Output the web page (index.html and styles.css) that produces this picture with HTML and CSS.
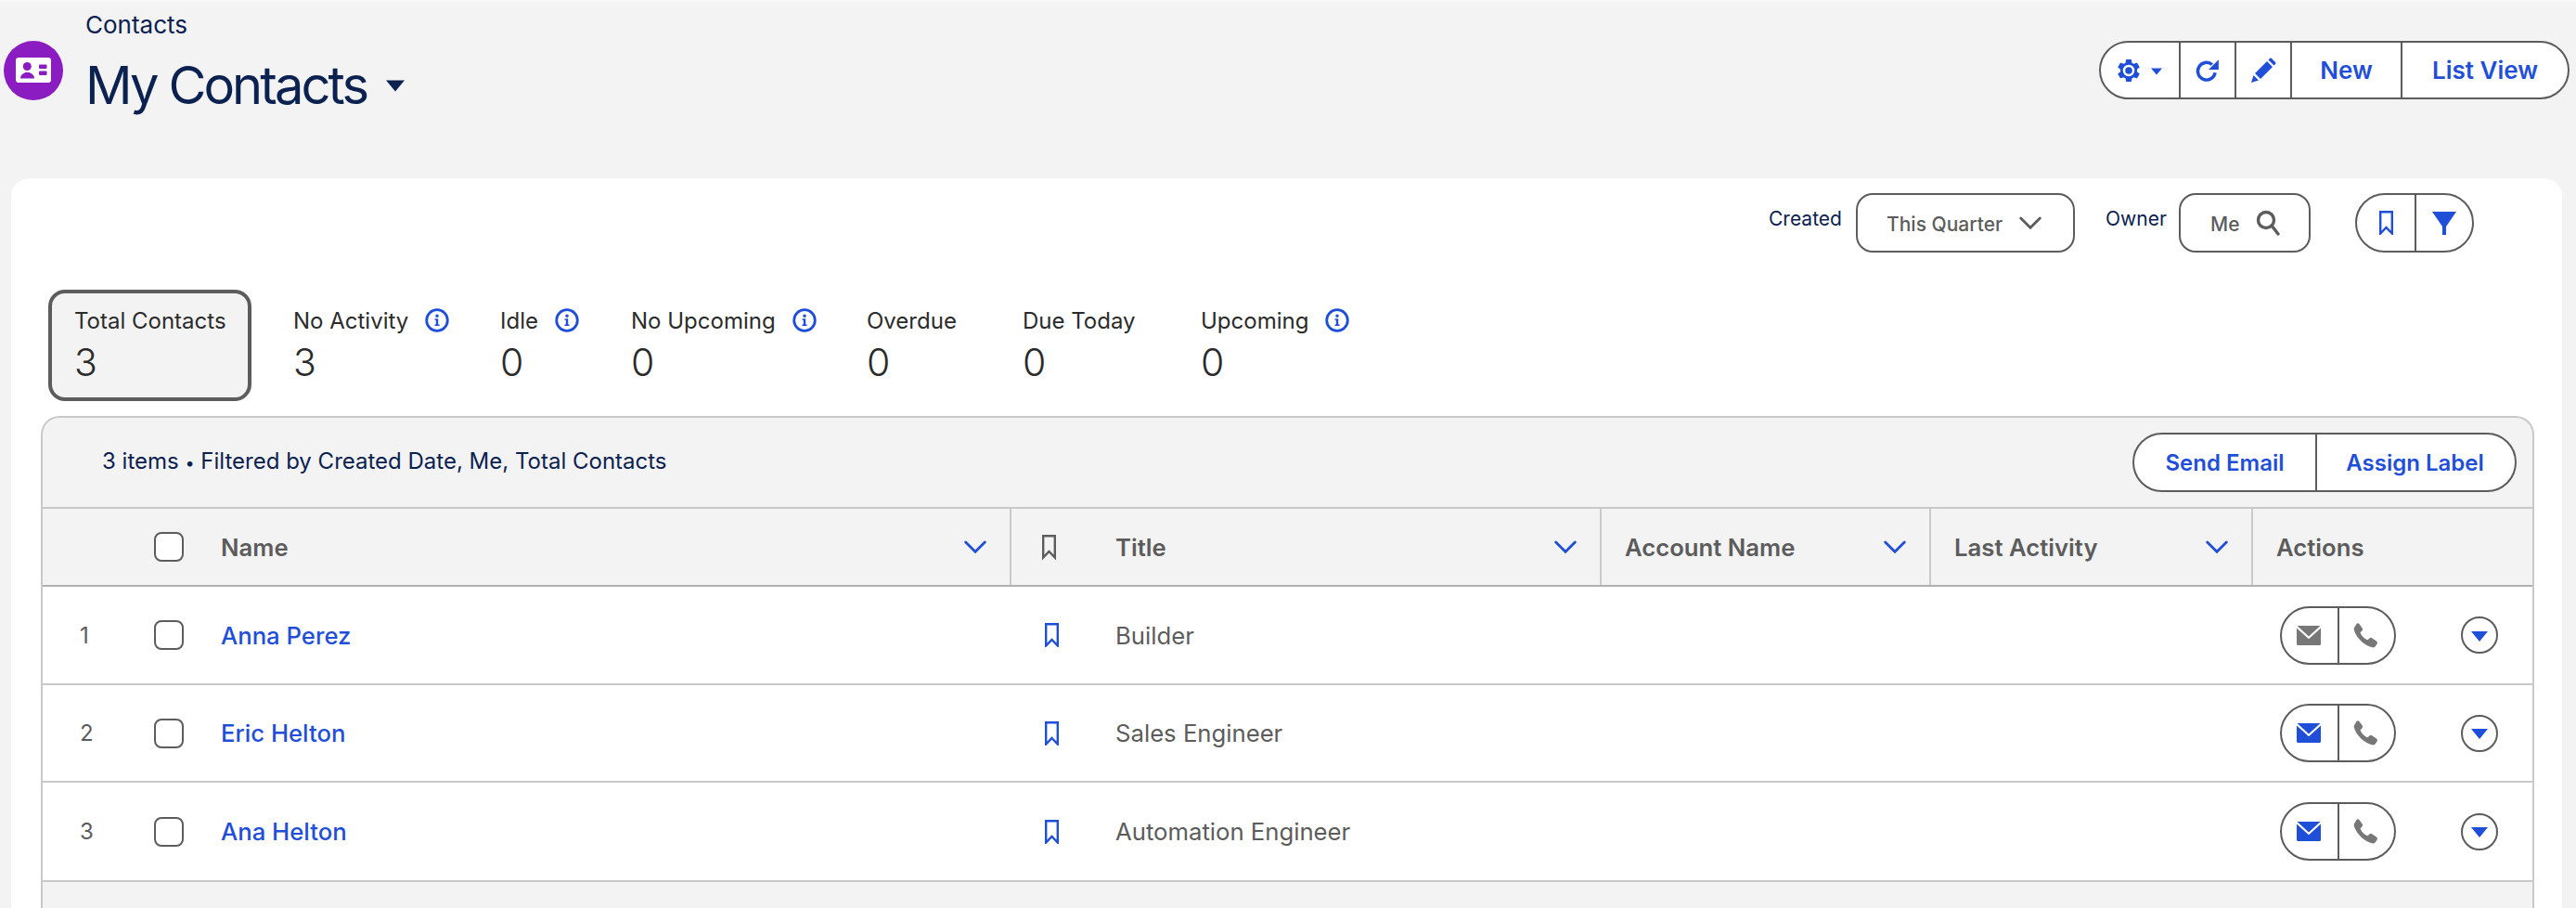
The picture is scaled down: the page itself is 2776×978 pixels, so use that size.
FILE: index.html
```html
<!DOCTYPE html>
<html lang="en">
<head>
<meta charset="utf-8">
<title>My Contacts</title>
<link rel="stylesheet" href="styles.css">
</head>
<body>
<svg class="defs" width="0" height="0" aria-hidden="true">
  <symbol id="bookmark" viewBox="0 0 15 26"><path d="M1.200 24.500V1.200h12.600v23.300L7.500 18z" fill="none" stroke="currentColor" stroke-width="2.400"/></symbol>
  <symbol id="chev" viewBox="0 0 24 15"><path d="M1.700 2L12 12.300 22.300 2" fill="none" stroke="currentColor" stroke-width="2.800" stroke-linecap="round"/></symbol>
  <symbol id="mail" viewBox="0 0 26 21"><path d="M.5 0h25L13 11.500z" fill="currentColor"/><path d="M0 2.500l13 11.800L26 2.500V19.500a1.500 1.500 0 0 1-1.500 1.500h-23A1.500 1.500 0 0 1 0 19.500z" fill="currentColor"/></symbol>
  <symbol id="phone" viewBox="0 0 26 26"><path d="M3.500.8C4.500 0 5.600.2 6.300 1.100l3 4.200c.6.9.5 1.900-.2 2.600L7.700 9.300c-.4.4-.4.800-.2 1.300 1.200 2.800 3.700 5.400 6.500 6.800.5.300 1 .200 1.400-.2l1.400-1.400c.700-.7 1.700-.8 2.500-.2l4.700 3.200c1 .7 1.200 1.800.6 2.800l-1.400 2.200c-.8 1.300-2.200 1.900-3.700 1.500C11 23.400 2.900 15 .8 7.300.4 5.900.900 4.700 1.900 3.700z" fill="currentColor"/></symbol>
  <symbol id="caret" viewBox="0 0 20 12"><path d="M0 0h20L10 12z" fill="currentColor"/></symbol>
  <symbol id="info" viewBox="0 0 26 26"><circle cx="13" cy="13" r="11.300" fill="none" stroke="currentColor" stroke-width="2.800"/><path d="M10.500 11.200h3.700v6.300h1.400v1.500h-5.100v-1.500h1.300v-4.800h-1.300zM13 6.500a1.800 1.800 0 1 1 0 3.600 1.800 1.800 0 0 1 0-3.600z" fill="currentColor"/></symbol>
</svg>

<header class="page-head">
  <div class="head-icon">
    <svg viewBox="0 0 64 64" width="64" height="64">
      <circle cx="32" cy="32" r="32" fill="#8a1cc2"/>
      <rect x="13" y="18" width="38" height="27" rx="3" fill="#fff"/>
      <circle cx="25.300" cy="27.500" r="4.500" fill="#8a1cc2"/>
      <path d="M18 40.500c0-4 3-5.500 5.500-6.500h4c2.500 1 5.500 2.500 5.500 6.500z" fill="#8a1cc2"/>
      <rect x="38" y="25.500" width="8.500" height="4.500" rx="1" fill="#8a1cc2"/>
      <rect x="38" y="32.500" width="8.500" height="4.500" rx="1" fill="#8a1cc2"/>
    </svg>
  </div>
  <div class="head-titles">
    <div class="crumb">Contacts</div>
    <h1 class="title">My Contacts <svg class="title-caret" width="20" height="13"><use href="#caret"/></svg></h1>
  </div>
  <div class="btn-group head-actions">
    <button class="btn btn-gear">
      <svg width="30" height="30" viewBox="0 0 24 24"><path fill="#1f4fd8" d="M19.140 12.940c.04-.3.06-.61.06-.94 0-.32-.02-.64-.07-.94l2.030-1.580c.18-.14.23-.41.12-.61l-1.920-3.320c-.12-.22-.37-.29-.59-.22l-2.390.96c-.5-.38-1.030-.7-1.620-.94l-.36-2.540c-.04-.24-.24-.41-.48-.41h-3.840c-.24 0-.43.17-.47.41l-.36 2.540c-.59.24-1.130.57-1.620.94l-2.390-.96c-.22-.08-.47 0-.59.22L2.740 8.870c-.12.21-.08.47.12.61l2.030 1.580c-.05.3-.09.63-.09.94s.02.64.07.94l-2.030 1.580c-.18.14-.23.41-.12.61l1.920 3.320c.12.22.37.29.59.22l2.390-.96c.5.38 1.030.7 1.620.94l.36 2.540c.05.24.24.41.48.41h3.840c.24 0 .44-.17.47-.41l.36-2.540c.59-.24 1.130-.56 1.620-.94l2.390.96c.22.08.47 0 .59-.22l1.920-3.320c.12-.22.07-.47-.12-.61z"/><circle cx="12" cy="12" r="5" fill="#fff"/><circle cx="12" cy="12" r="3" fill="#1f4fd8"/></svg>
      <svg class="gear-caret" width="12" height="8"><use href="#caret"/></svg>
    </button>
    <button class="btn btn-icon">
      <svg width="28" height="28" viewBox="0 0 26 26"><path d="M20.500 15a8.700 8.700 0 1 1-3-8" fill="none" stroke="#1f4fd8" stroke-width="3.200"/><path d="M24 2v10H14z" fill="#1f4fd8"/></svg>
    </button>
    <button class="btn btn-icon">
      <svg width="28" height="28" viewBox="0 0 28 28"><path d="M1 27l2.500-8L9 24.500zM5 17L18 4l6 6L11 23zM19.500 2.500l1.500-1.500c.6-.6 1.400-.6 2 0l4 4c.6.6.6 1.400 0 2L25.500 8.500z" fill="#1f4fd8"/></svg>
    </button>
    <button class="btn btn-new">New</button>
    <button class="btn btn-list">List View</button>
  </div>
</header>

<main class="card">
  <div class="filters">
    <span class="filter-label">Created</span>
    <div class="select select-quarter"><span class="select-text">This Quarter</span> <svg width="24" height="15"><use href="#chev"/></svg></div>
    <span class="filter-label label-owner">Owner</span>
    <div class="select select-owner"><span class="select-text">Me</span>
      <svg width="26" height="28" viewBox="0 0 26 28"><circle cx="11" cy="11" r="8.500" fill="none" stroke="#5c5c5c" stroke-width="3.400"/><path d="M17 17l7 9" stroke="#5c5c5c" stroke-width="3.400" stroke-linecap="round"/></svg>
    </div>
    <div class="btn-group filter-group">
      <button class="btn btn-bm"><svg width="15" height="26" class="blue"><use href="#bookmark"/></svg></button>
      <button class="btn btn-funnel"><svg width="26" height="25" viewBox="0 0 26 25"><path d="M0 0h26L15 16h-4z" fill="#1f4fd8"/><rect x="11" y="13" width="4" height="12" fill="#1f4fd8"/></svg></button>
    </div>
  </div>

  <div class="kpis">
    <div class="kpi kpi-total"><div class="kpi-label">Total Contacts</div><div class="kpi-value">3</div></div>
    <div class="kpi kpi-a"><div class="kpi-label">No Activity <svg class="info" width="26" height="26"><use href="#info"/></svg></div><div class="kpi-value">3</div></div>
    <div class="kpi kpi-b"><div class="kpi-label">Idle <svg class="info" width="26" height="26"><use href="#info"/></svg></div><div class="kpi-value">0</div></div>
    <div class="kpi kpi-c"><div class="kpi-label">No Upcoming <svg class="info" width="26" height="26"><use href="#info"/></svg></div><div class="kpi-value">0</div></div>
    <div class="kpi kpi-d"><div class="kpi-label">Overdue</div><div class="kpi-value">0</div></div>
    <div class="kpi kpi-e"><div class="kpi-label">Due Today</div><div class="kpi-value">0</div></div>
    <div class="kpi kpi-f"><div class="kpi-label">Upcoming <svg class="info" width="26" height="26"><use href="#info"/></svg></div><div class="kpi-value">0</div></div>
  </div>

  <section class="table">
    <div class="toolbar">
      <span class="summary">3 items <span class="dot">•</span> Filtered by Created Date, Me, Total Contacts</span>
      <div class="btn-group tool-actions">
        <button class="btn btn-send">Send Email</button>
        <button class="btn btn-assign">Assign Label</button>
      </div>
    </div>

    <div class="row row-head">
      <div class="cell"></div>
      <div class="cell cell-check"><span class="checkbox"></span></div>
      <div class="cell cell-text sep">Name<svg class="sort" width="24" height="15"><use href="#chev"/></svg></div>
      <div class="cell cell-bm"><svg class="bm-head" width="15" height="30"><use href="#bookmark"/></svg></div>
      <div class="cell cell-text sep">Title<svg class="sort" width="24" height="15"><use href="#chev"/></svg></div>
      <div class="cell cell-text sep">Account Name<svg class="sort" width="24" height="15"><use href="#chev"/></svg></div>
      <div class="cell cell-text sep">Last Activity<svg class="sort" width="24" height="15"><use href="#chev"/></svg></div>
      <div class="cell cell-text">Actions</div>
    </div>

    <div class="row row-data">
      <div class="cell cell-num">1</div>
      <div class="cell cell-check"><span class="checkbox"></span></div>
      <div class="cell cell-text"><a class="link">Anna Perez</a></div>
      <div class="cell cell-bm"><svg class="blue" width="15" height="26"><use href="#bookmark"/></svg></div>
      <div class="cell cell-text cell-plain">Builder</div>
      <div class="cell"></div>
      <div class="cell"></div>
      <div class="cell cell-actions">
        <div class="btn-group row-actions">
          <button class="btn btn-mail"><svg class="muted" width="26" height="21"><use href="#mail"/></svg></button>
          <button class="btn btn-phone"><svg class="muted" width="27" height="27"><use href="#phone"/></svg></button>
        </div>
        <button class="round"><svg width="18" height="11"><use href="#caret"/></svg></button>
      </div>
    </div>

    <div class="row row-data row-2">
      <div class="cell cell-num">2</div>
      <div class="cell cell-check"><span class="checkbox"></span></div>
      <div class="cell cell-text"><a class="link">Eric Helton</a></div>
      <div class="cell cell-bm"><svg class="blue" width="15" height="26"><use href="#bookmark"/></svg></div>
      <div class="cell cell-text cell-plain">Sales Engineer</div>
      <div class="cell"></div>
      <div class="cell"></div>
      <div class="cell cell-actions">
        <div class="btn-group row-actions">
          <button class="btn btn-mail"><svg class="blue" width="26" height="21"><use href="#mail"/></svg></button>
          <button class="btn btn-phone"><svg class="muted" width="27" height="27"><use href="#phone"/></svg></button>
        </div>
        <button class="round"><svg width="18" height="11"><use href="#caret"/></svg></button>
      </div>
    </div>

    <div class="row row-data row-3">
      <div class="cell cell-num">3</div>
      <div class="cell cell-check"><span class="checkbox"></span></div>
      <div class="cell cell-text"><a class="link">Ana Helton</a></div>
      <div class="cell cell-bm"><svg class="blue" width="15" height="26"><use href="#bookmark"/></svg></div>
      <div class="cell cell-text cell-plain">Automation Engineer</div>
      <div class="cell"></div>
      <div class="cell"></div>
      <div class="cell cell-actions">
        <div class="btn-group row-actions">
          <button class="btn btn-mail"><svg class="blue" width="26" height="21"><use href="#mail"/></svg></button>
          <button class="btn btn-phone"><svg class="muted" width="27" height="27"><use href="#phone"/></svg></button>
        </div>
        <button class="round"><svg width="18" height="11"><use href="#caret"/></svg></button>
      </div>
    </div>
  </section>
</main>
</body>
</html>
```
FILE: styles.css
```css
* { box-sizing: border-box; }
html, body { margin: 0; height: 978px; overflow: hidden; }
body {
  background: #f3f3f3;
  font-family: Inter, "Liberation Sans", sans-serif;
  color: #0b2150;
}
.defs { position: absolute; }
svg { display: block; flex: none; }
.blue { color: #1f4fd8; }
.muted { color: #777; }

.page-head {
  height: 192px;
  display: flex;
  align-items: flex-start;
  padding: 0 7px 0 4px;
  box-shadow: inset 0 2px 0 #f8f8f8;
}
.head-icon { margin-top: 44px; width: 64px; height: 64px; }
.head-titles { margin-left: 24px; padding-top: 11px; }
.crumb { font-size: 26px; line-height: 32px; }
.title {
  margin: 17px 0 0;
  font-size: 56px;
  line-height: 64px;
  font-weight: 400;
  letter-spacing: -2.9px;
  display: flex;
  align-items: center;
  gap: 21px;
}
.title-caret { color: #0b2150; margin-top: 1px; }

.btn-group {
  display: flex;
  border: 2px solid #5c5c5c;
  border-radius: 32px;
  background: #fff;
  overflow: hidden;
}
.btn {
  border: 0;
  border-left: 2px solid #5c5c5c;
  background: none;
  padding: 0;
  display: flex;
  align-items: center;
  justify-content: center;
  font: 600 26px Inter, "Liberation Sans", sans-serif;
  color: #1f4fd8;
}
.btn:first-child { border-left: 0; }

.head-actions { margin: 44px 0 0 auto; height: 63px; width: 507px; }
.btn-gear { width: 84px; gap: 9px; padding-right: 3px; }
.gear-caret { color: #1f4fd8; margin-top: 3px; }
.btn-icon { width: 60px; }
.btn-new { width: 119px; }
.btn-list { flex: 1; }

.card {
  margin: 0 15px 0 12px;
  height: 786px;
  background: #fff;
  border-radius: 20px 20px 0 0;
  padding: 16px 30px 0 32px;
}
.filters {
  display: flex;
  align-items: flex-start;
  height: 64px;
  padding-left: 1862px;
}
.filter-label { font-size: 21px; line-height: 26px; margin-top: 15px; width: 94px; }
.label-owner { width: 79px; margin-left: 33px; }
.select {
  height: 64px;
  border: 2px solid #5c5c5c;
  border-radius: 18px;
  display: flex;
  align-items: center;
  font-size: 21px;
  font-weight: 500;
  color: #5c5c5c;
}
.select-text { padding-top: 3px; }
.select-quarter { width: 236px; padding-left: 31px; gap: 18px; }
.select-owner { width: 142px; padding-left: 32px; gap: 17px; }
.filter-group { margin-left: 48px; width: 128px; height: 64px; }
.btn-bm { width: 62px; }
.btn-funnel { flex: 1; }

.kpis {
  display: flex;
  margin: 40px 0 0 8px;
  height: 120px;
  align-items: flex-start;
}
.kpi { padding-top: 18px; }
.kpi-label {
  font-size: 24px;
  line-height: 32px;
  color: #2b2b2b;
  display: flex;
  align-items: center;
  gap: 18px;
}
.info { color: #1f4fd8; margin-top: -2px; }
.kpi-value {
  font-size: 41px;
  line-height: 50px;
  font-weight: 300;
  color: #2b2b2b;
  margin-top: 3px;
}
.kpi-total {
  width: 219px;
  height: 120px;
  border: 4px solid #5c5c5c;
  border-radius: 18px;
  background: #f3f3f3;
  padding: 14px 0 0 24px;
}
.kpi-a { margin-left: 45px; width: 223px; }
.kpi-b { width: 141px; }
.kpi-c { width: 254px; }
.kpi-d { width: 168px; }
.kpi-e { width: 192px; }

.table {
  margin-top: 16px;
  height: 530px;
  border: 2px solid #c9c9c9;
  border-bottom: 0;
  border-radius: 20px 20px 0 0;
  background: #f3f3f3;
  overflow: hidden;
}
.toolbar {
  height: 98px;
  border-bottom: 2px solid #c9c9c9;
  display: flex;
  align-items: flex-start;
  justify-content: space-between;
  padding: 16px 17px 0 64px;
}
.summary { font-size: 24px; line-height: 30px; margin-top: 16px; }
.dot { font-size: 18px; }
.tool-actions { height: 64px; width: 414px; }
.tool-actions .btn { font-size: 24px; }
.btn-send { width: 195px; }
.btn-assign { flex: 1; padding-right: 2px; }

.row {
  display: grid;
  grid-template-columns: 106px 60px 878px 87px 549px 355px 347px 301px;
}
.row-head {
  height: 84px;
  border-bottom: 2px solid #b0b0b0;
  font-size: 25.700px;
  font-weight: 600;
  color: #5c5c5c;
}
.row-data {
  height: 106px;
  background: #fff;
  border-bottom: 2px solid #c9c9c9;
  font-size: 25.700px;
  color: #5c5c5c;
}
.row-2 { height: 105px; }
.row-3 { height: 107px; }
.cell { display: flex; align-items: center; min-width: 0; }
.cell-num { padding-left: 40px; font-size: 24px; }
.cell-check { padding-left: 14px; }
.checkbox {
  width: 32px;
  height: 32px;
  border: 2px solid #5c5c5c;
  border-radius: 8px;
  background: #fff;
}
.cell-text { padding-left: 25px; }
.row-head .cell-text:nth-child(3), .row-data .cell-text:nth-child(3) { padding-left: 26px; }
.sep { justify-content: space-between; padding-right: 25px; border-right: 2px solid #c9c9c9; }
.sort { color: #1f4fd8; }
.cell-bm { padding-left: 36px; }
.row-head .cell-bm { padding-left: 33px; }
.bm-head { color: #5c5c5c; }
.link { color: #1f4fd8; font-weight: 500; }
.cell-actions { padding-left: 29px; gap: 70px; }
.row-actions { width: 125px; height: 63px; }
.btn-mail { width: 60px; padding-right: 3px; }
.btn-phone { flex: 1; padding-right: 2px; }
.round {
  width: 40px;
  height: 40px;
  border: 2px solid #5c5c5c;
  border-radius: 50%;
  background: #fff;
  padding: 2px 0 0;
  color: #1f4fd8;
  display: flex;
  align-items: center;
  justify-content: center;
}
```
